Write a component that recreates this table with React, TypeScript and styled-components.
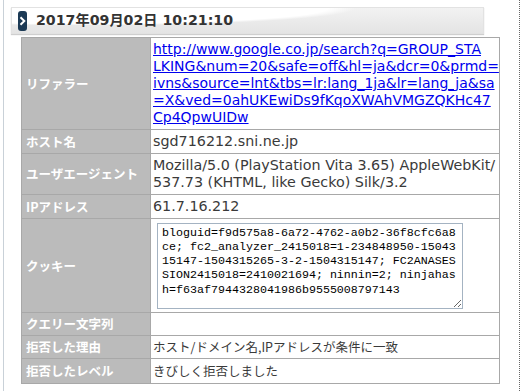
import React from 'react';
import styled, { createGlobalStyle } from 'styled-components';

const GlobalStyle = createGlobalStyle`
  html, body {
    margin: 0;
    padding: 0;
    background: #fff;
  }
  body {
    font-family: 'DejaVu Sans', 'Noto Sans CJK JP', sans-serif;
  }
`;

const Frame = styled.div`
  margin-left: 3px;
  width: 517px;
  height: 391px;
  border-left: 1px solid #c9d1d8;
  border-right: 1px dotted #666;
  box-sizing: border-box;
  padding: 7px 0 0 7px;
`;

const EntryHeader = styled.div`
  width: 473px;
  height: 27px;
  box-sizing: border-box;
  border: 1px solid #e2e2e2;
  box-shadow: 0 1px 1px #cfcfcf;
  display: flex;
  align-items: center;
  gap: 9px;
  padding-left: 6px;
  background:
    radial-gradient(ellipse 58% 70% at 15% 0%, #fff 90%, rgba(255, 255, 255, 0) 100%),
    linear-gradient(#f2f2f2, #e4e4e4);
`;

const Badge = styled.span`
  width: 9px;
  height: 20px;
  border-radius: 3px;
  background: #1c3a55;
  display: flex;
  align-items: center;
  justify-content: center;
`;

const Title = styled.h2`
  margin: 0;
  font-family: 'DejaVu Sans', 'Noto Sans CJK JP', sans-serif;
  font-size: 14.2px;
  font-weight: bold;
  color: #333;
  line-height: 1;
`;

const LogTable = styled.table`
  margin: 3px 0 0 10px;
  width: 479px;
  border-collapse: collapse;
  table-layout: fixed;
`;

const Label = styled.th`
  width: 124px;
  background: #bbbbbb;
  border: 1px solid #a8a8a8;
  color: #fff;
  font-family: 'Noto Sans CJK JP', sans-serif;
  font-size: 12.5px;
  line-height: 16px;
  font-weight: bold;
  text-align: left;
  vertical-align: middle;
  padding: 0 0 0 4px;
  white-space: nowrap;
`;

const Value = styled.td<{ $h: number }>`
  border: 1px solid #a8a8a8;
  background: #fff;
  color: #3a3a3a;
  font-family: 'DejaVu Sans', 'Noto Sans CJK JP', sans-serif;
  font-size: 14.3px;
  line-height: 17px;
  padding: 2px;
  vertical-align: middle;
  height: ${p => p.$h}px;
  box-sizing: border-box;
`;

const JpText = styled.span`
  font-family: 'Noto Sans CJK JP', sans-serif;
  font-size: 12.5px;
`;

const RefLink = styled.a`
  color: #0000ee;
  font-size: 14px;
  text-decoration: underline;
  white-space: nowrap;
`;

const CookieBox = styled.textarea`
  display: block;
  margin: 0 0 0 4px;
  width: 306px;
  height: 86px;
  box-sizing: border-box;
  padding: 2px 4px;
  border: 1px solid #a4b3c2;
  font-family: 'Liberation Mono', monospace;
  font-size: 11.67px;
  line-height: 14.3px;
  color: #000;
  word-break: break-all;
  resize: both;
  overflow: hidden;
`;

const refLines = [
  'http://www.google.co.jp/search?q=GROUP_STA',
  'LKING&num=20&safe=off&hl=ja&dcr=0&prmd=',
  'ivns&source=lnt&tbs=lr:lang_1ja&lr=lang_ja&sa',
  '=X&ved=0ahUKEwiDs9fKqoXWAhVMGZQKHc47',
  'Cp4QpwUIDw',
];

const cookie =
  'bloguid=f9d575a8-6a72-4762-a0b2-36f8cfc6a8ce; fc2_analyzer_2415018=1-234848950-1504315147-1504315265-3-2-1504315147; FC2ANASESSION2415018=2410021694; ninnin=2; ninjahash=f63af7944328041986b9555008797143';

const App: React.FC = () => {
  return (
    <>
      <GlobalStyle />
      <Frame>
        <EntryHeader>
          <Badge>
            <svg width="7" height="10" viewBox="0 0 7 10">
              <path d="M1.5 1.2 L5.3 5 L1.5 8.8" fill="none" stroke="#fff" strokeWidth="2" />
            </svg>
          </Badge>
          <Title>2017年09月02日 10:21:10</Title>
        </EntryHeader>
        <LogTable>
          <tbody>
            <tr>
              <Label>リファラー</Label>
              <Value $h={92}>
                <RefLink href="#">
                  {refLines.map((line, i) => (
                    <React.Fragment key={i}>
                      {line}
                      {i < refLines.length - 1 && <br />}
                    </React.Fragment>
                  ))}
                </RefLink>
              </Value>
            </tr>
            <tr>
              <Label>ホスト名</Label>
              <Value $h={24}>sgd716212.sni.ne.jp</Value>
            </tr>
            <tr>
              <Label>ユーザエージェント</Label>
              <Value $h={41}>
                Mozilla/5.0 (PlayStation Vita 3.65) AppleWebKit/
                <br />
                537.73 (KHTML, like Gecko) Silk/3.2
              </Value>
            </tr>
            <tr>
              <Label>IPアドレス</Label>
              <Value $h={24}>61.7.16.212</Value>
            </tr>
            <tr>
              <Label>クッキー</Label>
              <Value $h={94}>
                <CookieBox readOnly defaultValue={cookie} />
              </Value>
            </tr>
            <tr>
              <Label>クエリー文字列</Label>
              <Value $h={23}></Value>
            </tr>
            <tr>
              <Label>拒否した理由</Label>
              <Value $h={23}>
                <JpText>ホスト/ドメイン名,IPアドレスが条件に一致</JpText>
              </Value>
            </tr>
            <tr>
              <Label>拒否したレベル</Label>
              <Value $h={25}>
                <JpText>きびしく拒否しました</JpText>
              </Value>
            </tr>
          </tbody>
        </LogTable>
      </Frame>
    </>
  );
};

export default App;
